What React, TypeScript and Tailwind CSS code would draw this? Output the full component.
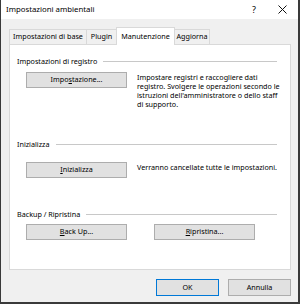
import React from "react";

const font = "font-['Noto_Sans',sans-serif]";

function WinButton({
  children,
  className = "",
}: {
  children: React.ReactNode;
  className?: string;
}) {
  return (
    <button
      className={`flex items-center justify-center bg-[#e1e1e1] border border-[#adadad] text-[7.2px] text-black leading-none ${className}`}
    >
      {children}
    </button>
  );
}

function SectionLabel({ text }: { text: string }) {
  return (
    <div className="flex items-center h-[9px]">
      <span className="text-[7.2px] leading-none text-black whitespace-nowrap">
        {text}
      </span>
      <div className="flex-1 h-px bg-[#c8c8c8] ml-[6px]" />
    </div>
  );
}

const tabs = [
  { label: "Impostazioni di base", w: "w-[78px]" },
  { label: "Plugin", w: "w-[31px]" },
  { label: "Manutenzione", w: "w-[59px]" },
  { label: "Aggiorna", w: "w-[36px]" },
];

export default function App() {
  return (
    <div
      className={`w-[300px] h-[304px] bg-[#f0f0f0] border-l border-r-2 border-b-2 border-[#3a3a3a] flex flex-col ${font}`}
    >
      {/* title bar */}
      <div className="h-[19px] bg-white flex items-center pl-[5px] pr-[10px]">
        <span className="text-[7.8px] text-black flex-1">
          Impostazioni ambientali
        </span>
        <span className="text-[9px] text-black mr-[22px]">?</span>
        <svg width="9" height="9" viewBox="0 0 9 9" className="mr-[1px]">
          <path d="M0.5 0.5 L8.5 8.5 M8.5 0.5 L0.5 8.5" stroke="#111" strokeWidth="1" />
        </svg>
      </div>

      <div className="pl-[8px] pr-[7px] pt-[8px] flex flex-col">
        {/* tabs */}
        <div className="flex items-end h-[17px] relative z-10">
          {tabs.map((t, i) => {
            const active = t.label === "Manutenzione";
            return (
              <div
                key={t.label}
                className={`${t.w} ${i > 0 ? "-ml-px" : ""} ${
                  active
                    ? "h-[18px] -mb-px bg-white relative z-10"
                    : "h-[15px] bg-[#f0f0f0]"
                } border border-b-0 border-[#d9d9d9] flex items-center justify-center text-[7.2px] text-black leading-none whitespace-nowrap`}
              >
                {t.label}
              </div>
            );
          })}
        </div>

        {/* panel */}
        <div className="h-[226px] bg-white border border-[#d9d9d9] pl-[7px] pr-[13px] pt-[12px] flex flex-col">
          <SectionLabel text="Impostazioni di registro" />
          <div className="flex mt-[6px]">
            <WinButton className="w-[101px] h-[16px] ml-[9px] shrink-0">
              <span>
                Impo<u>s</u>tazione...
              </span>
            </WinButton>
            <p className="ml-[10px] text-[7.2px] leading-[9px] text-black pt-[1px] whitespace-nowrap">
              Impostare registri e raccogliere dati
              <br />
              registro. Svolgere le operazioni secondo le
              <br />
              istruzioni dell'amministratore o dello staff
              <br />
              di supporto.
            </p>
          </div>

          <div className="mt-[31px]">
            <SectionLabel text="Inizializza" />
          </div>
          <div className="flex mt-[13px] items-start">
            <WinButton className="w-[101px] h-[16px] ml-[9px] shrink-0">
              <span>
                <u>I</u>nizializza
              </span>
            </WinButton>
            <p className="ml-[10px] text-[7.2px] leading-[9px] text-black pt-[1px] whitespace-nowrap">
              Verranno cancellate tutte le impostazioni.
            </p>
          </div>

          <div className="mt-[32px]">
            <SectionLabel text="Backup / Ripristina" />
          </div>
          <div className="flex mt-[5px]">
            <WinButton className="w-[101px] h-[16px] ml-[9px]">
              <span>
                <u>B</u>ack Up...
              </span>
            </WinButton>
            <WinButton className="w-[101px] h-[16px] ml-[27px]">
              <span>
                <u>R</u>ipristina...
              </span>
            </WinButton>
          </div>
        </div>

        {/* footer */}
        <div className="flex justify-end gap-[9px] mt-[9px]">
          <WinButton className="w-[63px] h-[17px] !border-[#0078d7]">
            OK
          </WinButton>
          <WinButton className="w-[63px] h-[17px]">Annulla</WinButton>
        </div>
      </div>
    </div>
  );
}
